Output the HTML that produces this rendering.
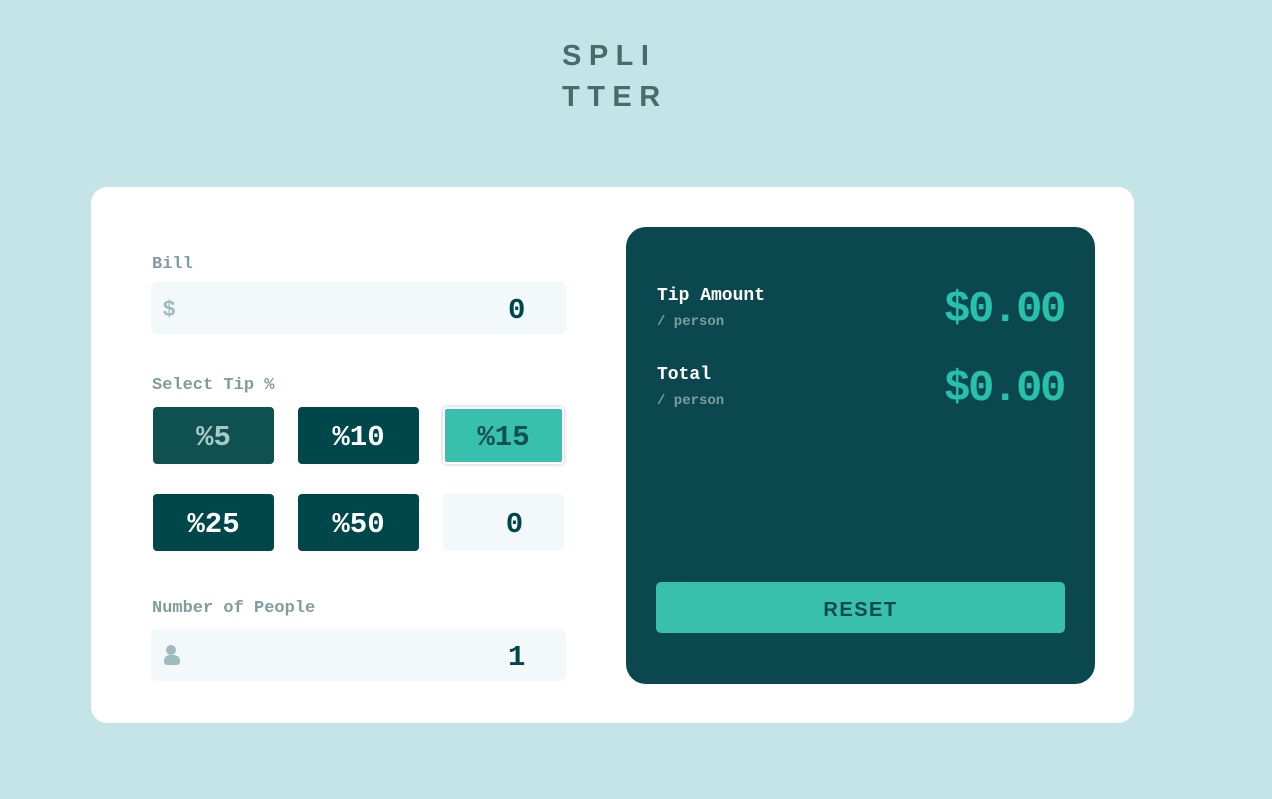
<!DOCTYPE html>
<html><head><meta charset="utf-8"><style>
*{box-sizing:border-box;margin:0;padding:0}
body{width:1272px;height:799px;background:#c5e4e7;position:relative;overflow:hidden;font-family:"Liberation Mono",monospace;font-weight:bold}
.abs{position:absolute}
.logo{left:562px;top:36px;font-family:"Liberation Sans",sans-serif;font-size:29px;line-height:41px;letter-spacing:7.5px;color:#4a6a6c}
.card{left:91px;top:187px;width:1043px;height:536px;background:#fff;border-radius:16px}
.lbl{font-size:17px;color:#7f9c9f}
.inp{background:#f3f9fa;border-radius:6px}
.btn{width:121px;height:57px;border-radius:4px;background:#00474b;color:#fff;font-size:29px;display:flex;align-items:center;justify-content:center;padding-top:3px}
.panel{left:626px;top:227px;width:469px;height:457px;background:#0b474f;border-radius:20px}
.t{color:#fff;font-size:18px}
.s{color:#7f9d9f;font-size:14px}
.amt{color:#26c0ab;font-size:44px;letter-spacing:-2.4px}
</style></head><body>
<div class="abs logo">SPLI<br>TTER</div>
<div class="abs card"></div>
<div class="abs lbl" style="left:152px;top:255px">Bill</div>
<div class="abs inp" style="left:151px;top:282px;width:415px;height:52px"></div>
<div class="abs" style="left:163px;top:296px;font-family:'Liberation Sans',sans-serif;font-size:22px;color:#9ebbbd">$</div>
<div class="abs" style="left:508px;top:294px;font-size:29px;color:#00474b">0</div>
<div class="abs lbl" style="left:152px;top:376px">Select Tip %</div>
<div class="abs btn" style="left:153px;top:407px;background:#0f5050;color:#a8c9c9">%5</div>
<div class="abs btn" style="left:298px;top:407px">%10</div>
<div class="abs btn" style="left:443px;top:407px;background:#38bfae;color:#0f5050;border:2px solid #fff;box-shadow:0 0 4px rgba(0,0,0,.25)">%15</div>
<div class="abs btn" style="left:153px;top:494px">%25</div>
<div class="abs btn" style="left:298px;top:494px">%50</div>
<div class="abs btn inp" style="left:443px;top:494px;color:#00474b;background:#f3f9fa;padding-left:22px">0</div>
<div class="abs lbl" style="left:152px;top:599px">Number of People</div>
<div class="abs inp" style="left:151px;top:629px;width:415px;height:52px"></div>
<div class="abs" style="left:166px;top:645px;width:10px;height:10px;border-radius:50%;background:#9ebbbd"></div>
<div class="abs" style="left:164px;top:655px;width:16px;height:10px;border-radius:6px 6px 3px 3px;background:#9ebbbd"></div>
<div class="abs" style="left:508px;top:641px;font-size:29px;color:#00474b">1</div>
<div class="abs panel"></div>
<div class="abs t" style="left:657px;top:286px">Tip Amount</div>
<div class="abs s" style="left:657px;top:314px">/ person</div>
<div class="abs amt" style="right:208px;top:285px">$0.00</div>
<div class="abs t" style="left:657px;top:365px">Total</div>
<div class="abs s" style="left:657px;top:393px">/ person</div>
<div class="abs amt" style="right:208px;top:364px">$0.00</div>
<div class="abs" style="left:656px;top:582px;width:409px;height:51px;border-radius:5px;background:#38bfae;color:#0f4a50;font-family:'Liberation Sans',sans-serif;font-size:20px;letter-spacing:1.5px;display:flex;align-items:center;justify-content:center;padding-top:5px">RESET</div>
</body></html>
